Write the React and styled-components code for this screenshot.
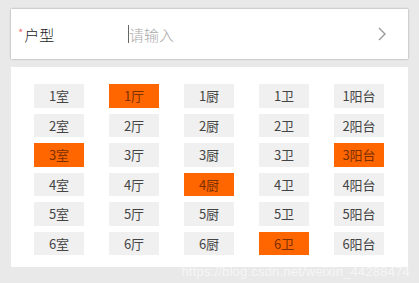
import React from 'react'
import styled, { createGlobalStyle } from 'styled-components'

const GlobalStyle = createGlobalStyle`
  body {
    margin: 0;
    background: #e9e9e9;
    font-family: "Noto Sans CJK SC", "Noto Sans", sans-serif;
  }
`

const rows = [1, 2, 3, 4, 5, 6]
const kinds = ['室', '厅', '厨', '卫', '阳台']
const selected = { '厅': 1, '室': 3, '阳台': 3, '厨': 4, '卫': 6 }

function App() {
  return (
    <Page>
      <GlobalStyle />
      <Field>
        <Label>
          <Star>*</Star>户型
        </Label>
        <Input>
          <Caret />
          请输入
        </Input>
        <Chevron viewBox="0 0 12 16">
          <path d="M3 2 L9 8 L3 14" fill="none" stroke="#999" strokeWidth="1.4" />
        </Chevron>
      </Field>
      <Panel>
        <Grid>
          {rows.map((n) =>
            kinds.map((k) => (
              <Chip key={n + k} $active={selected[k] === n}>
                {n}
                {k}
              </Chip>
            ))
          )}
        </Grid>
      </Panel>
      <Watermark>https://blog.csdn.net/weixin_44288474</Watermark>
    </Page>
  )
}

export default App

const Page = styled.div`
  position: relative;
  width: 419px;
  height: 283px;
  padding: 9px 11px 0 11px;
  box-sizing: border-box;
  overflow: hidden;
`

const Field = styled.div`
  height: 50px;
  background: #fff;
  box-shadow: 0 0 2px rgba(0, 0, 0, 0.35);
  display: flex;
  align-items: center;
  padding-left: 7px;
  padding-right: 20px;
  box-sizing: border-box;
`

const Label = styled.div`
  width: 110px;
  font-size: 15px;
  font-weight: 300;
  color: #222;
  display: flex;
  align-items: center;
`

const Star = styled.span`
  color: #f05a5a;
  font-size: 12px;
  margin-right: 1px;
  position: relative;
  top: -2px;
`

const Input = styled.div`
  flex: 1;
  font-size: 15px;
  font-weight: 300;
  color: #aaa;
  display: flex;
  align-items: center;
`

const Caret = styled.span`
  display: inline-block;
  width: 1px;
  height: 18px;
  background: #666;
`

const Chevron = styled.svg`
  width: 12px;
  height: 16px;
`

const Panel = styled.div`
  margin-top: 8px;
  height: 200px;
  background: #fff;
  padding: 17px 0 0 23px;
  box-sizing: border-box;
`

const Grid = styled.div`
  display: grid;
  grid-template-columns: repeat(5, 50px);
  column-gap: 25px;
  row-gap: 6px;
`

const Chip = styled.div`
  height: 23.5px;
  display: flex;
  align-items: center;
  justify-content: center;
  font-size: 13px;
  background: ${(p) => (p.$active ? '#ff6600' : '#f0f0f0')};
  color: ${(p) => (p.$active ? '#7a3000' : '#444')};
`

const Watermark = styled.div`
  position: absolute;
  right: 9px;
  bottom: 4px;
  font-size: 13px;
  font-family: "Liberation Sans", Arial, sans-serif;
  color: rgba(255, 255, 255, 0.6);
  letter-spacing: 0.2px;
`
